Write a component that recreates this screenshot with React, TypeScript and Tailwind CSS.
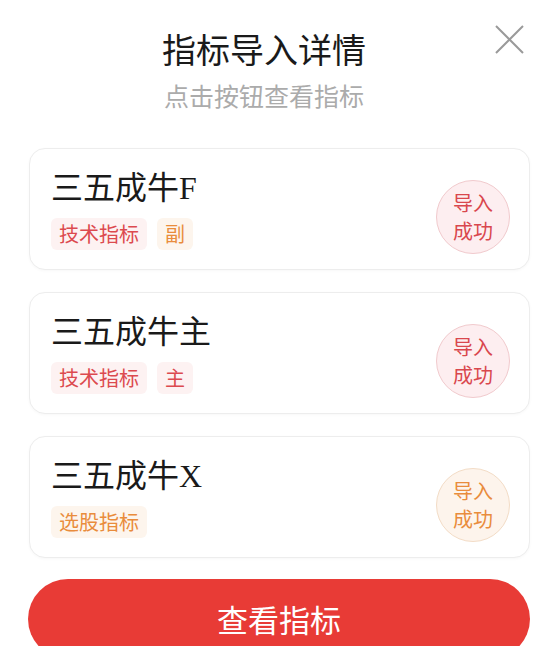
import React from "react";

type Tag = { text: string; tone: "red" | "orange" };
type Item = { name: string; tags: Tag[]; tone: "red" | "orange" };

const items: Item[] = [
  { name: "三五成牛F", tags: [{ text: "技术指标", tone: "red" }, { text: "副", tone: "orange" }], tone: "red" },
  { name: "三五成牛主", tags: [{ text: "技术指标", tone: "red" }, { text: "主", tone: "red" }], tone: "red" },
  { name: "三五成牛X", tags: [{ text: "选股指标", tone: "orange" }], tone: "orange" },
];

const sans = { fontFamily: '"Noto Sans CJK SC", "Noto Sans", sans-serif' };
const mixed = { fontFamily: '"Liberation Serif", "Noto Sans CJK SC", serif' };

function TagChip({ tag }: { tag: Tag }) {
  return (
    <span
      className={
        tag.tone === "red"
          ? "h-[32px] px-[8px] rounded-[6px] flex items-center text-[20px] leading-none bg-[#fdf2f2] text-[#dc4a4f]"
          : "h-[32px] px-[8px] rounded-[6px] flex items-center text-[20px] leading-none bg-[#fdf5ed] text-[#e98c3c]"
      }
      style={sans}
    >
      {tag.text}
    </span>
  );
}

function Card({ item }: { item: Item }) {
  return (
    <div className="h-[122px] rounded-[16px] border border-[#ededed] bg-white shadow-[0_1px_3px_rgba(0,0,0,0.03)] flex items-center pl-[21px] pr-[19px]">
      <div className="flex-1 flex flex-col gap-[11px] mt-[1px]">
        <div className="text-[32px] leading-[38px] text-[#1a1a1a]" style={mixed}>
          {item.name}
        </div>
        <div className="flex gap-[10px]">
          {item.tags.map((t, i) => (
            <TagChip key={i} tag={t} />
          ))}
        </div>
      </div>
      <div
        className={
          item.tone === "red"
            ? "mt-[16px] w-[74px] h-[74px] rounded-full border border-[#f1cacd] bg-[#fdeef0] text-[#d9474d] flex flex-col items-center justify-center text-[20px] leading-[28px]"
            : "mt-[16px] w-[74px] h-[74px] rounded-full border border-[#f3dcc6] bg-[#fdf4ec] text-[#e98c3c] flex flex-col items-center justify-center text-[20px] leading-[28px]"
        }
        style={sans}
      >
        <span>导入</span>
        <span>成功</span>
      </div>
    </div>
  );
}

export default function App() {
  return (
    <div className="w-[554px] h-[646px] overflow-hidden bg-white relative" style={sans}>
      <button className="absolute right-[30px] top-[25px] w-[29px] h-[29px]" aria-label="close">
        <svg viewBox="0 0 29 29" width="29" height="29">
          <path d="M1 1 L28 28 M28 1 L1 28" stroke="#9a9a9a" strokeWidth="2" fill="none" />
        </svg>
      </button>
      <div className="flex flex-col items-center pt-[27px] pr-[26px]">
        <div className="text-[34px] leading-[44px] text-[#1a1a1a]">指标导入详情</div>
        <div className="text-[25px] leading-[32px] text-[#ababab] mt-[8px]">点击按钮查看指标</div>
      </div>
      <div className="pl-[29px] pr-[24px] mt-[37px] flex flex-col gap-[22px]">
        {items.map((it, i) => (
          <Card key={i} item={it} />
        ))}
      </div>
      <div className="pl-[28px] pr-[24px] mt-[21px]">
        <div className="h-[80px] rounded-full bg-[#e83b36] flex items-center justify-center text-white text-[31px]">
          查看指标
        </div>
      </div>
    </div>
  );
}
